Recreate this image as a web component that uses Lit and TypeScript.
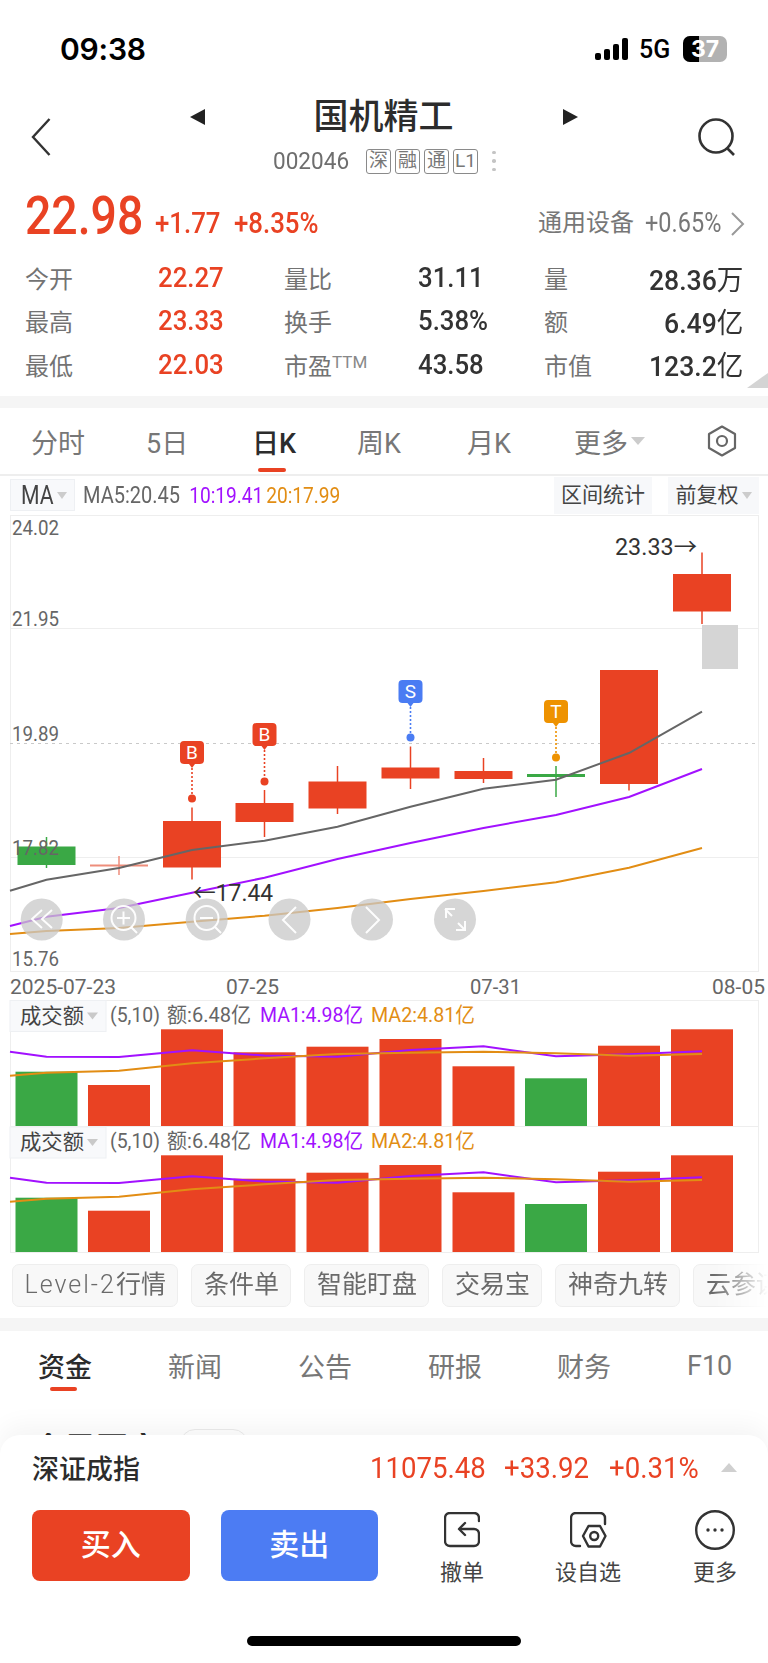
import { LitElement, html, css, svg } from "lit";
import { customElement } from "lit/decorators.js";
import { ifDefined } from "lit/directives/if-defined.js";

const RED = "#e94223";
const GREEN = "#3aa845";
const PURPLE = "#a211ff";
const ORANGE = "#e28d14";
const XS = [46.5, 119, 192, 264.5, 337.5, 410.5, 483.5, 556, 629, 702];

type Candle = { i: number; top: number; bot: number; hi: number; lo: number; c: string };
const CANDLES: Candle[] = [
  { i: 0, top: 846.5, bot: 865, hi: 837, lo: 868, c: GREEN },
  { i: 1, top: 864.5, bot: 866.5, hi: 856, lo: 875, c: "#ee8d7b" },
  { i: 2, top: 821, bot: 867.5, hi: 807.5, lo: 879.5, c: RED },
  { i: 3, top: 803, bot: 822, hi: 790, lo: 837, c: RED },
  { i: 4, top: 781.5, bot: 808.5, hi: 766, lo: 814, c: RED },
  { i: 5, top: 767.5, bot: 778.5, hi: 746.5, lo: 789, c: RED },
  { i: 6, top: 771, bot: 779, hi: 758, lo: 783, c: RED },
  { i: 7, top: 774, bot: 777, hi: 766, lo: 797, c: GREEN },
  { i: 8, top: 670, bot: 784, hi: 670, lo: 790.5, c: RED },
  { i: 9, top: 574, bot: 611.5, hi: 552.5, lo: 624, c: RED },
];

const pts = (ys: number[]) =>
  [10, ...XS].map((x, k) => `${x},${ys[k]}`).join(" ");

const MA_GRAY = [890.7, 879.7, 868, 850, 840.7, 826.7, 806.7, 788.7, 779.7, 753, 711.7];
const MA_PURPLE = [926, 916.7, 908, 892.7, 877.7, 859, 843, 828, 815, 797, 769];
const MA_ORANGE = [934, 931, 928, 921.7, 915.7, 908, 899, 891, 882.3, 867.7, 848];
const VOL_P = [1051.7, 1056.7, 1057, 1050.3, 1055.5, 1056.7, 1050, 1046.3, 1056.3, 1054.3, 1051.3];
const VOL_O = [1075.7, 1072.7, 1070.7, 1063.3, 1058.3, 1054, 1052.7, 1051.7, 1053.3, 1055.7, 1054];
const BAR_1 = [1071.7, 1085, 1029.3, 1052.3, 1046.7, 1039, 1066.3, 1078.3, 1045.7, 1029.3];
const BAR_2 = [1197.7, 1210.7, 1155.3, 1178.7, 1172.7, 1165, 1192.3, 1204, 1171.7, 1155.3];
const BAR_GREEN = [0, 7];

const label = (x: number, y: number, s: string, cls: string, len?: number) => svg`
  <text x=${x} y=${y} class=${cls} dominant-baseline="central"
    textLength=${ifDefined(len)} lengthAdjust=${ifDefined(len ? "spacingAndGlyphs" : undefined)}>${s}</text>`;

const marker = (x: number, top: number, dot: number, ch: string, c: string) => svg`
  <line x1=${x} x2=${x} y1=${top + 23} y2=${dot} stroke=${c} stroke-width="1.6" stroke-dasharray="2 2"></line>
  <path d="M${x - 8} ${top}h16a4 4 0 0 1 4 4v15a4 4 0 0 1-4 4h-5l-3 4-3-4h-5a4 4 0 0 1-4-4v-15a4 4 0 0 1 4-4z" fill=${c}></path>
  <circle cx=${x} cy=${dot} r="4" fill=${c}></circle>
  <text x=${x} y=${top + 11.5} class="mk" text-anchor="middle" dominant-baseline="central">${ch}</text>`;

const volPanel = (tops: number[], bottom: number, dy: number, legendY: number) => svg`
  ${tops.map(
    (t, i) => svg`<rect x=${XS[i] - 31} y=${t} width="62" height=${bottom - t} fill=${BAR_GREEN.includes(i) ? GREEN : RED}></rect>`
  )}
  <polyline points=${pts(VOL_P.map((v) => v + dy))} fill="none" stroke=${PURPLE} stroke-width="2"></polyline>
  <polyline points=${pts(VOL_O.map((v) => v + dy))} fill="none" stroke=${ORANGE} stroke-width="2"></polyline>
  <rect x="10" y=${legendY - 15} width="96" height="31" fill="#f8f9fb" stroke="#eef0f3"></rect>
  ${label(20, legendY, "成交额", "v-title", 64)}
  <path d="M87 ${legendY - 3}h11l-5.500 7z" fill="#c9c9c9"></path>
  ${label(110, legendY - 1, "(5,10)", "leg grey", 50)}
  ${label(167, legendY - 1, "额:6.48亿", "leg grey", 84)}
  ${label(260, legendY - 1, "MA1:4.98亿", "leg purple", 103)}
  ${label(371, legendY - 1, "MA2:4.81亿", "leg orange", 104)}
`;

const CIRCLES = [41.7, 124, 206.7, 289.5, 372, 455];

@customElement("app-root")
export class AppRoot extends LitElement {
  static styles = css`
    :host {
      display: block;
      position: relative;
      width: 768px;
      height: 1663px;
      overflow: hidden;
      background: #fff;
      color: #333;
      font-family: Roboto, "Noto Sans CJK SC", sans-serif;
    }
    .status {
      height: 98px;
      display: flex;
      align-items: center;
      justify-content: space-between;
      padding: 0 41px 0 60px;
    }
    .time {
      font: 600 30px Inter, sans-serif;
      color: #000;
      letter-spacing: -0.2px;
    }
    .status-right {
      display: flex;
      align-items: center;
      gap: 11px;
    }
    .fiveg {
      font: 500 25px Roboto, sans-serif;
      color: #000;
      width: 33px;
    }
    .battery {
      position: relative;
      width: 44px;
      height: 26px;
      border-radius: 7px;
      overflow: hidden;
      background: #b2b2b2;
      text-align: center;
      font: 700 23px/26px Inter, sans-serif;
      color: #fff;
    }
    .battery .lvl {
      position: absolute;
      left: 0;
      top: 0;
      bottom: 0;
      width: 16px;
      background: #000;
    }
    .battery span {
      position: relative;
    }
    .title {
      display: grid;
      grid-template-columns: 190px 388px 190px;
      height: 82px;
    }
    .back {
      padding: 20px 0 0 31px;
    }
    .search {
      padding: 20px 0 0 120px;
    }
    .mid {
      display: flex;
      flex-direction: column;
    }
    .name-row {
      display: flex;
      align-items: center;
      justify-content: space-between;
      height: 38px;
    }
    .name {
      font-size: 35px;
      line-height: 38px;
      font-weight: 500;
      color: #2c2c2c;
      margin: 2px 0 0 -1px;
    }
    .code-row {
      display: flex;
      align-items: center;
      height: 26px;
      margin-top: 12px;
      padding-left: 83px;
    }
    .code {
      width: 93px;
      font-size: 24px;
      color: #6e6e6e;
      transform: scaleX(0.94);
      transform-origin: left center;
    }
    .badge {
      width: 25px;
      height: 25px;
      box-sizing: border-box;
      border: 1px solid #8a8a8a;
      border-radius: 3px;
      margin-right: 4px;
      font-size: 19px;
      line-height: 22px;
      text-align: center;
      color: #777;
    }
    .dots {
      display: flex;
      flex-direction: column;
      gap: 5px;
      margin-left: 10px;
    }
    .dots i {
      width: 3.500px;
      height: 3.500px;
      border-radius: 50%;
      background: #c4c4c4;
    }
    .price-row {
      display: flex;
      align-items: flex-end;
      height: 66px;
      padding-left: 25px;
      position: relative;
    }
    .big {
      width: 130px;
      font-size: 53px;
      line-height: 60px;
      font-weight: 500;
      color: ${css([RED] as any)};
      transform: scaleX(0.875);
      transform-origin: left bottom;
    }
    .chg {
      font-size: 30px;
      line-height: 47px;
      font-weight: 500;
      color: ${css([RED] as any)};
      transform: scaleX(0.86);
      transform-origin: left bottom;
    }
    .chg.a {
      width: 79px;
    }
    .chg.b {
      width: 304px;
    }
    .sector {
      font-size: 24px;
      line-height: 45px;
      color: #777;
      width: 107px;
    }
    .sector-v {
      font-size: 27px;
      line-height: 45px;
      color: #777;
      width: 86px;
      transform: scaleX(0.87);
      transform-origin: left bottom;
    }
    .sec-arrow {
      height: 45px;
      display: flex;
      align-items: center;
      margin-left: -2px;
    }
    .stats {
      display: grid;
      grid-template-columns: 133px 126px 134px 126px 1fr auto;
      grid-auto-rows: 43.300px;
      align-items: center;
      margin: 10px 25px 10px 25px;
      height: 130px;
    }
    .k {
      font-size: 24px;
      color: #737373;
    }
    .k sup {
      font-size: 17px;
      line-height: 0;
      vertical-align: 7px;
      color: #888;
    }
    .v {
      font-size: 28px;
      font-weight: 500;
      color: #333;
      transform: scaleX(0.92);
      transform-origin: left center;
      white-space: nowrap;
    }
    .v.up {
      color: ${css([RED] as any)};
    }
    .v.r {
      transform: scaleX(0.95);
      transform-origin: right center;
      text-align: right;
    }
    .v .cn {
      font-size: 28px;
      font-weight: 400;
    }
    .corner {
      position: absolute;
      right: 0;
      top: 373px;
      width: 0;
      height: 0;
      border-left: 21px solid transparent;
      border-bottom: 15px solid #d4d4d4;
    }
    .band {
      height: 12px;
      background: #f5f5f5;
    }
    .periods {
      position: relative;
      height: 68px;
      box-sizing: border-box;
      border-bottom: 2px solid #eee;
      display: grid;
      grid-template-columns: 115px 106px 105px 110px 107px 132px 1fr;
      padding-left: 31px;
      align-items: center;
      font-size: 27px;
      color: #777;
    }
    .periods .on {
      color: #2c2c2c;
      font-weight: 500;
      position: relative;
    }
    .periods .on::after {
      content: "";
      position: absolute;
      left: 6px;
      bottom: -11px;
      width: 28px;
      height: 4px;
      border-radius: 2px;
      background: ${css([RED] as any)};
    }
    .more {
      display: flex;
      align-items: center;
      gap: 3px;
    }
    .tri {
      width: 0;
      height: 0;
      border-left: 7px solid transparent;
      border-right: 7px solid transparent;
      border-top: 8px solid #ccc;
    }
    .tri.sm {
      border-left-width: 5px;
      border-right-width: 5px;
      border-top-width: 7px;
    }
    .gear {
      display: flex;
    }
    .toolbar {
      display: flex;
      height: 39px;
      padding: 1px 9px 0 10px;
      align-items: flex-start;
      box-sizing: border-box;
    }
    .ma {
      display: flex;
      align-items: center;
      gap: 3px;
      box-sizing: border-box;
      width: 65px;
      height: 32px;
      margin-top: 2px;
      padding-left: 10px;
      background: #f8f9fb;
      border: 1px solid #eef0f3;
      font-size: 25px;
      color: #444;
    }
    .ma b {
      font-weight: 400;
      display: inline-block;
      width: 33px;
      transform: scaleX(0.85);
      transform-origin: left center;
    }
    .legend {
      flex: 1;
      display: flex;
      align-items: center;
      height: 36px;
      margin-left: 8px;
      font-size: 23px;
      white-space: nowrap;
      transform: scaleX(0.87);
      transform-origin: left center;
    }
    .legend .grey {
      width: 122px;
    }
    .legend .purple {
      width: 88.500px;
      font-size: 22px;
    }
    .legend .orange {
      font-size: 22px;
    }
    .grey {
      color: #666;
      fill: #666;
    }
    .purple {
      color: ${css([PURPLE] as any)};
      fill: ${css([PURPLE] as any)};
    }
    .orange {
      color: ${css([ORANGE] as any)};
      fill: ${css([ORANGE] as any)};
    }
    .tool {
      display: flex;
      align-items: center;
      justify-content: center;
      gap: 3px;
      height: 37px;
      background: #f7f8fa;
      font-size: 21px;
      line-height: 33px;
      color: #444;
    }
    .tool.a {
      width: 98px;
      margin-right: 16px;
    }
    .tool.b {
      width: 91px;
    }
    .chart {
      display: block;
      height: 739px;
      width: 768px;
    }
    .chart text {
      font-family: Roboto, "Noto Sans CJK SC", sans-serif;
    }
    .axis {
      font-size: 21px;
      fill: #666;
    }
    .peak {
      font-size: 23px;
      fill: #333;
    }
    .mk {
      font-size: 19px;
      fill: #fff;
    }
    .leg {
      font-size: 21px;
    }
    .v-title {
      font-size: 21px;
      fill: #444;
    }
    .chips {
      display: flex;
      gap: 13px;
      padding: 10px 0 11px 12px;
      overflow: hidden;
      -webkit-mask-image: linear-gradient(to right, #000 93%, transparent 100%);
      mask-image: linear-gradient(to right, #000 93%, transparent 100%);
    }
    .chip {
      flex: none;
      height: 43px;
      box-sizing: border-box;
      padding: 0 11.500px;
      border: 1px solid #eeeeee;
      border-radius: 7px;
      background: #f8f8f8;
      font-size: 25px;
      line-height: 40px;
      color: #6a6a6a;
      white-space: nowrap;
    }
    .chip .latin {
      letter-spacing: 2px;
      font-weight: 300;
    }
    .band2 {
      height: 13px;
      background: #f5f5f5;
    }
    .news {
      display: grid;
      grid-template-columns: 130px 130px 130px 129px 130px auto;
      justify-content: start;
      height: 72px;
      padding: 0 0 3px 38px;
      box-sizing: border-box;
      align-items: center;
      font-size: 27px;
      color: #777;
    }
    .news .on {
      color: #2c2c2c;
      font-weight: 500;
      position: relative;
    }
    .news .on::after {
      content: "";
      position: absolute;
      left: 12px;
      bottom: -6px;
      width: 27px;
      height: 4px;
      border-radius: 2px;
      background: ${css([RED] as any)};
    }
    .peek {
      display: flex;
      align-items: flex-start;
      box-sizing: border-box;
      height: 32px;
      overflow: hidden;
      padding: 30px 0 0 32px;
      font-size: 32px;
      line-height: 32px;
      font-weight: 700;
      color: #2c2c2c;
      gap: 20px;
    }
    .peek span {
      display: block;
      height: 2px;
      overflow: hidden;
    }
    .pill {
      width: 68px;
      height: 30px;
      box-sizing: border-box;
      border: 1px solid #ececec;
      border-radius: 15px;
      margin-top: -4px;
    }
    .sheet {
      position: absolute;
      left: 0;
      right: 0;
      bottom: 0;
      height: 228px;
      background: #fff;
      border-radius: 20px 20px 0 0;
      box-shadow: 0 -10px 24px rgba(0, 0, 0, 0.045);
    }
    .idx {
      display: flex;
      align-items: center;
      height: 64px;
      padding: 0 0 0 32px;
    }
    .idx-name {
      width: 338px;
      font-size: 27px;
      font-weight: 500;
      color: #2c2c2c;
    }
    .idx-v {
      font-size: 30px;
      color: ${css([RED] as any)};
      transform: scaleX(0.92);
      transform-origin: left center;
      white-space: nowrap;
    }
    .idx-v.a {
      width: 134px;
    }
    .idx-v.b {
      width: 105px;
    }
    .idx-v.c {
      width: 112px;
    }
    .up-tri {
      width: 0;
      height: 0;
      border-left: 8px solid transparent;
      border-right: 8px solid transparent;
      border-bottom: 9px solid #d0d0d0;
    }
    .actions {
      display: flex;
      padding: 11px 0 0 32px;
    }
    .btn {
      width: 157.500px;
      height: 71px;
      border-radius: 8px;
      text-align: center;
      font-size: 30px;
      line-height: 69px;
      font-weight: 500;
      color: #fff;
      margin-right: 31px;
    }
    .btn.buy {
      background: ${css([RED] as any)};
    }
    .btn.sell {
      background: #4c7cf3;
    }
    .act {
      display: flex;
      flex-direction: column;
      align-items: center;
      width: 66px;
      font-size: 22px;
      line-height: 30px;
      color: #444;
      margin-top: 2px;
    }
    .act svg {
      display: block;
      margin-bottom: 10px;
    }
    .act.one {
      margin-left: 20px;
    }
    .act.two {
      margin-left: 60px;
    }
    .act.three {
      margin-left: 61px;
      margin-top: 0;
    }
    .act.three svg {
      margin-bottom: 8px;
    }
    .home {
      position: absolute;
      left: 247px;
      bottom: 17px;
      width: 274px;
      height: 10px;
      border-radius: 5px;
      background: #000;
    }
  `;

  private chart() {
    return svg`
      <rect x="10.500" y="515.500" width="748" height="456" fill="none" stroke="#eee"></rect>
      <line x1="10" x2="759" y1="628.500" y2="628.500" stroke="#eee"></line>
      <line x1="10" x2="759" y1="857.500" y2="857.500" stroke="#eee"></line>
      <line x1="10" x2="759" y1="743.500" y2="743.500" stroke="#c9c9c9" stroke-dasharray="3 4"></line>
      <rect x="702" y="625" width="36" height="44" fill="#d5d5d5"></rect>
      ${CANDLES.map(
        (c) => svg`
        <line x1=${XS[c.i]} x2=${XS[c.i]} y1=${c.hi} y2=${c.lo} stroke=${c.c} stroke-width="1.500"></line>
        <rect x=${XS[c.i] - 29} y=${c.top} width="58" height=${c.bot - c.top} fill=${c.c}></rect>`
      )}
      ${label(12, 528, "24.02", "axis", 47)}
      ${label(12, 619, "21.95", "axis", 47)}
      ${label(12, 734, "19.89", "axis", 47)}
      ${label(12, 848, "17.82", "axis", 47)}
      ${label(12, 959, "15.76", "axis", 47)}
      <polyline points=${pts(MA_GRAY)} fill="none" stroke="#666" stroke-width="2"></polyline>
      <polyline points=${pts(MA_PURPLE)} fill="none" stroke=${PURPLE} stroke-width="2"></polyline>
      <polyline points=${pts(MA_ORANGE)} fill="none" stroke=${ORANGE} stroke-width="2"></polyline>
      ${label(615, 547, "23.33→", "peak", 82)}
      ${label(193, 893, "←17.44", "peak", 80)}
      ${marker(192, 741, 798.5, "B", RED)}
      ${marker(264.5, 723, 781.5, "B", RED)}
      ${marker(410.5, 680, 737.5, "S", "#4a7cf3")}
      ${marker(556, 700, 757.5, "T", "#ee9200")}
      ${CIRCLES.map((x) => svg`<circle cx=${x} cy="919.500" r="21" fill="#c8c8c8" fill-opacity="0.75"></circle>`)}
      <g fill="none" stroke="#fff" stroke-width="2" stroke-opacity="0.95">
        <path d="M42 910l-10 9 10 9M52 910l-10 9 10 9"></path>
        <circle cx="123.500" cy="918" r="12"></circle>
        <path d="M117 918h13M123.500 911.500v13M131 927l6 6"></path>
        <circle cx="206.500" cy="918" r="12"></circle>
        <path d="M200 918h13M215 927l6 6"></path>
        <path d="M296 907l-13 13 13 13"></path>
        <path d="M366 907l13 13-13 13"></path>
        <path d="M446 918v-9h9M445 909l7 7M465 921v9h-9M465 930l-7-7"></path>
      </g>
      ${label(10, 987, "2025-07-23", "axis", 106)}
      ${label(226, 987, "07-25", "axis", 53)}
      ${label(470, 987, "07-31", "axis", 51)}
      ${label(712, 987, "08-05", "axis", 53)}
      <line x1="10.500" x2="10.500" y1="1000" y2="1252" stroke="#eee"></line>
      <line x1="758.500" x2="758.500" y1="1000" y2="1252" stroke="#eee"></line>
      <line x1="10" x2="759" y1="1000.500" y2="1000.500" stroke="#eee"></line>
      <line x1="10" x2="759" y1="1126.500" y2="1126.500" stroke="#eee"></line>
      <line x1="10" x2="759" y1="1252.500" y2="1252.500" stroke="#eee"></line>
      ${volPanel(BAR_1, 1126, 0, 1015.5)}
      ${volPanel(BAR_2, 1252, 126, 1142)}
    `;
  }

  render() {
    return html`
      <div class="status">
        <div class="time">09:38</div>
        <div class="status-right">
          <svg width="33" height="22" viewBox="0 0 33 22">
            <rect x="0" y="15" width="6" height="7" rx="2" fill="#000"></rect>
            <rect x="9" y="11" width="6" height="11" rx="2" fill="#000"></rect>
            <rect x="18" y="6" width="6" height="16" rx="2" fill="#000"></rect>
            <rect x="27" y="0" width="6" height="22" rx="2" fill="#000"></rect>
          </svg>
          <div class="fiveg">5G</div>
          <div class="battery"><div class="lvl"></div><span>37</span></div>
        </div>
      </div>
      <div class="title">
        <div class="back">
          <svg width="20" height="38" viewBox="0 0 20 38">
            <path d="M18.500 1L2 19l16.500 18" fill="none" stroke="#333" stroke-width="2.400"></path>
          </svg>
        </div>
        <div class="mid">
          <div class="name-row">
            <svg width="15" height="16" viewBox="0 0 15 16"><path d="M15 0v16L0 8z" fill="#222"></path></svg>
            <div class="name">国机精工</div>
            <svg width="15" height="16" viewBox="0 0 15 16"><path d="M0 0v16l15-8z" fill="#222"></path></svg>
          </div>
          <div class="code-row">
            <div class="code">002046</div>
            <div class="badge">深</div>
            <div class="badge">融</div>
            <div class="badge">通</div>
            <div class="badge">L1</div>
            <div class="dots"><i></i><i></i><i></i></div>
          </div>
        </div>
        <div class="search">
          <svg width="38" height="38" viewBox="0 0 38 38">
            <circle cx="18" cy="18" r="16.500" fill="none" stroke="#333" stroke-width="2.600"></circle>
            <path d="M29 30l7 7" stroke="#333" stroke-width="2.600" fill="none"></path>
          </svg>
        </div>
      </div>
      <div class="price-row">
        <div class="big">22.98</div>
        <div class="chg a">+1.77</div>
        <div class="chg b">+8.35%</div>
        <div class="sector">通用设备</div>
        <div class="sector-v">+0.65%</div>
        <div class="sec-arrow">
          <svg width="18" height="26" viewBox="0 0 18 26">
            <path d="M3 2l11 11L3 24" fill="none" stroke="#999" stroke-width="2"></path>
          </svg>
        </div>
      </div>
      <div class="stats">
        <div class="k">今开</div><div class="v up">22.27</div>
        <div class="k">量比</div><div class="v">31.11</div>
        <div class="k">量</div><div class="v r">28.36<span class="cn">万</span></div>
        <div class="k">最高</div><div class="v up">23.33</div>
        <div class="k">换手</div><div class="v">5.38%</div>
        <div class="k">额</div><div class="v r">6.49<span class="cn">亿</span></div>
        <div class="k">最低</div><div class="v up">22.03</div>
        <div class="k">市盈<sup>TTM</sup></div><div class="v">43.58</div>
        <div class="k">市值</div><div class="v r">123.2<span class="cn">亿</span></div>
      </div>
      <div class="corner"></div>
      <div class="band"></div>
      <div class="periods">
        <div>分时</div>
        <div>5日</div>
        <div class="on">日K</div>
        <div>周K</div>
        <div>月K</div>
        <div class="more">更多<span class="tri"></span></div>
        <div class="gear">
          <svg width="32" height="32" viewBox="0 0 32 32">
            <path d="M16 1.500l13 7.500v14l-13 7.500-13-7.500V9z" fill="none" stroke="#666" stroke-width="2.200" stroke-linejoin="round"></path>
            <circle cx="16" cy="16" r="5" fill="none" stroke="#666" stroke-width="2.200"></circle>
          </svg>
        </div>
      </div>
      <div class="toolbar">
        <div class="ma"><b>MA</b><span class="tri sm"></span></div>
        <div class="legend">
          <span class="grey">MA5:20.45</span>
          <span class="purple">10:19.41</span>
          <span class="orange">20:17.99</span>
        </div>
        <div class="tool a">区间统计</div>
        <div class="tool b">前复权<span class="tri sm"></span></div>
      </div>
      <svg class="chart" viewBox="0 515 768 739">${this.chart()}</svg>
      <div class="chips">
        <div class="chip"><span class="latin">Level-2</span>行情</div>
        ${["条件单", "智能盯盘", "交易宝", "神奇九转", "云参谋"].map(
          (c) => html`<div class="chip">${c}</div>`
        )}
      </div>
      <div class="band2"></div>
      <div class="news">
        <div class="on">资金</div>
        <div>新闻</div>
        <div>公告</div>
        <div>研报</div>
        <div>财务</div>
        <div>F10</div>
      </div>
      <div class="peek"><span>今日开市</span><div class="pill"></div></div>
      <div class="sheet">
        <div class="idx">
          <div class="idx-name">深证成指</div>
          <div class="idx-v a">11075.48</div>
          <div class="idx-v b">+33.92</div>
          <div class="idx-v c">+0.31%</div>
          <div class="up-tri"></div>
        </div>
        <div class="actions">
          <div class="btn buy">买入</div>
          <div class="btn sell">卖出</div>
          <div class="act one">
            <svg width="36" height="36" viewBox="0 0 36 36" fill="none" stroke="#333" stroke-width="2.400" stroke-linecap="round" stroke-linejoin="round">
              <path d="M35 9V6a5 5 0 0 0-5-5H6a5 5 0 0 0-5 5v23a5 5 0 0 0 5 5h24a5 5 0 0 0 5-5v-7a5 5 0 0 0-5-5H16"></path>
              <path d="M21 11l-6 6 6 6"></path>
            </svg>
            撤单
          </div>
          <div class="act two">
            <svg width="37" height="36" viewBox="0 0 37 36" fill="none" stroke="#333" stroke-width="2.400" stroke-linecap="round" stroke-linejoin="round">
              <path d="M35 12V6a5 5 0 0 0-5-5H6a5 5 0 0 0-5 5v23a5 5 0 0 0 5 5h4"></path>
              <path d="M13 24l5.500-10h11.500l5.500 10-5.500 10.500H18.500z"></path>
              <circle cx="24.200" cy="24" r="4"></circle>
            </svg>
            设自选
          </div>
          <div class="act three">
            <svg width="40" height="40" viewBox="0 0 40 40">
              <circle cx="20" cy="20" r="18.800" fill="none" stroke="#333" stroke-width="2.400"></circle>
              <circle cx="13" cy="20" r="1.700" fill="#333"></circle>
              <circle cx="20" cy="20" r="1.700" fill="#333"></circle>
              <circle cx="27" cy="20" r="1.700" fill="#333"></circle>
            </svg>
            更多
          </div>
        </div>
        <div class="home"></div>
      </div>
    `;
  }
}
